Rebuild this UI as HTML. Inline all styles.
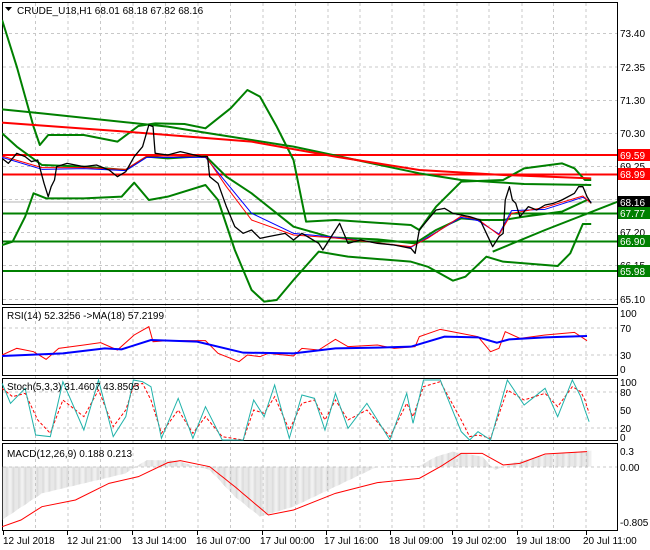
<!DOCTYPE html>
<html><head><meta charset="utf-8"><style>
html,body{margin:0;padding:0;background:#fff;width:650px;height:550px;overflow:hidden}
svg{display:block}
text{font-family:"Liberation Sans",sans-serif;font-size:10px;fill:#000}
</style></head><body>
<svg width="650" height="550" viewBox="0 0 650 550" xmlns="http://www.w3.org/2000/svg">
<defs>
<pattern id="hist" width="2.6" height="10" patternUnits="userSpaceOnUse"><rect x="0" y="0" width="0.9" height="10" fill="#b8b8b8"/></pattern>
<clipPath id="cMain"><rect x="2" y="2" width="615" height="303"/></clipPath>
</defs>
<rect width="650" height="550" fill="#fff"/>
<g stroke="#c8c8c8" stroke-dasharray="3,3" stroke-width="1">
<path d="M35.5 3V530M68 3V530M100.5 3V530M133 3V530M165.5 3V530M198 3V530M230.5 3V530M263 3V530M295.5 3V530M328 3V530M360 3V530M392 3V530M424 3V530M457 3V530M489 3V530M522 3V530M553.5 3V530M586 3V530"/>
<path d="M3 33.5H617M3 67H617M3 100.5H617M3 133.5H617M3 166.5H617M3 199.5H617M3 232.5H617M3 265.5H617M3 299.5H617"/>
<path d="M3 328H617M3 355H617M3 392H617M3 428H617M3 467H617"/>
</g>
<g fill="none" stroke="#000" stroke-width="1">
<rect x="2.5" y="2.5" width="615" height="302"/>
<rect x="2.5" y="307.5" width="615" height="68"/>
<rect x="2.5" y="378.5" width="615" height="62"/>
<rect x="2.5" y="443.5" width="615" height="87"/>
</g>
<g clip-path="url(#cMain)">
<path d="M3 155H617" stroke="#ff0000" stroke-width="2"/>
<path d="M3 174.5H617" stroke="#ff0000" stroke-width="2"/>
<path d="M3 202H617" stroke="#b4b4b4" stroke-width="1"/>
<path d="M3 213.5H617M3 241.5H617M3 271H617" stroke="#008000" stroke-width="2"/>
<g transform="scale(0.4193,0.33333)" fill="none" stroke-linejoin="round">
<polyline vector-effect="non-scaling-stroke" stroke="#008000" stroke-width="2" points="5,60 40,200 80,380 95,435 115,405 200,405 280,425 330,378 370,370 440,372 490,385 550,325 590,270 620,290 660,380 700,480 730,665 800,660 980,675 1000,690 1040,620 1100,545 1200,540 1250,505 1340,490 1370,505 1395,540 1410,540"/>
<polyline vector-effect="non-scaling-stroke" stroke="#008000" stroke-width="2" points="5,735 30,725 60,650 80,580 110,595 200,595 290,590 320,548 355,600 400,590 490,555 520,600 560,750 600,870 630,905 660,900 700,840 760,755 830,770 980,785 1020,800 1080,842 1110,830 1160,770 1200,785 1330,798 1360,760 1390,672 1410,672"/>
<polyline vector-effect="non-scaling-stroke" stroke="#008000" stroke-width="2" points="5,400 40,440 100,495 200,500 300,510 350,470 400,475 490,468 540,530 600,580 700,680 790,712 900,718 990,730 1040,690 1100,655 1150,660 1200,660 1250,650 1340,635 1400,600"/>
<polyline vector-effect="non-scaling-stroke" stroke="#008000" stroke-width="2" points="5,328 100,340 400,380 500,400 700,440 1000,520 1100,540 1250,552 1410,555"/>
<polyline vector-effect="non-scaling-stroke" stroke="#ff0000" stroke-width="2" points="5,368 300,395 600,425 800,470 1000,510 1200,525 1410,535"/>
<polyline vector-effect="non-scaling-stroke" stroke="#008000" stroke-width="2" points="1175,755 1300,690 1473,605"/>
<polyline vector-effect="non-scaling-stroke" stroke="#0000ff" stroke-width="1" points="5,472 100,508 200,506 300,512 350,472 490,472 540,548 600,640 700,700 800,712 980,742 1020,712 1100,652 1140,662 1190,702 1220,632 1300,628 1390,592 1410,606"/>
<polyline vector-effect="non-scaling-stroke" stroke="#ff0000" stroke-width="1" points="5,468 100,503 200,503 300,508 350,468 490,468 540,560 600,660 700,705 800,714 980,740 1020,715 1100,648 1140,658 1190,705 1220,640 1300,622 1390,588 1410,610"/>
<polyline vector-effect="non-scaling-stroke" stroke="#000" stroke-width="1.3" points="5,475 20,490 40,460 60,470 75,485 90,480 105,550 115,590 122,560 130,540 135,500 160,490 200,500 230,495 260,510 280,530 300,515 320,470 340,440 355,375 365,380 370,460 400,465 430,455 480,470 495,470 500,530 520,550 540,620 560,680 580,700 600,690 620,715 640,710 680,700 700,720 720,700 740,715 760,730 770,750 800,690 810,670 830,730 860,720 900,730 940,735 980,745 990,760 1000,690 1020,660 1040,630 1060,625 1080,640 1120,650 1145,660 1160,700 1175,740 1190,710 1200,700 1205,600 1215,560 1222,600 1230,610 1240,650 1260,620 1280,630 1300,615 1320,610 1340,600 1370,580 1380,560 1390,560 1400,590 1410,610"/>
</g>
</g>
<path d="M5 7h7l-3.5 4z" fill="#000"/>
<text x="17" y="14">CRUDE_U18,H1  68.01 68.18 67.82 68.16</text>
<g>
<text x="620" y="37">73.40</text><text x="620" y="71">72.35</text><text x="620" y="104">71.30</text><text x="620" y="137">70.30</text><text x="620" y="170">69.25</text><text x="620" y="236">67.20</text><text x="620" y="269">66.15</text><text x="620" y="303">65.10</text>
<rect x="618" y="149" width="32" height="12" fill="#ff0000"/><text x="620" y="159" style="fill:#fff">69.59</text>
<rect x="618" y="168" width="32" height="12" fill="#ff0000"/><text x="620" y="178" style="fill:#fff">68.99</text>
<rect x="618" y="196" width="32" height="12" fill="#000"/><text x="620" y="206" style="fill:#fff">68.16</text>
<rect x="618" y="207" width="32" height="12" fill="#008000"/><text x="620" y="217" style="fill:#fff">67.77</text>
<rect x="618" y="235" width="32" height="12" fill="#008000"/><text x="620" y="245" style="fill:#fff">66.90</text>
<rect x="618" y="265" width="32" height="12" fill="#008000"/><text x="620" y="275" style="fill:#fff">65.98</text>
</g>
<g transform="translate(0,300) scale(0.4193,0.33333)" fill="none">
<polyline vector-effect="non-scaling-stroke" stroke="#ff0000" stroke-width="1" points="5,165 40,145 80,155 110,178 140,145 200,135 240,128 280,150 320,105 355,80 365,125 400,122 490,122 520,160 570,185 590,165 620,170 640,160 700,168 720,145 760,150 800,118 830,140 900,135 940,145 990,140 1000,110 1050,88 1090,98 1140,110 1170,155 1190,145 1205,95 1240,115 1300,105 1370,97 1400,122"/>
<polyline vector-effect="non-scaling-stroke" stroke="#0000ff" stroke-width="2" points="5,168 150,160 250,145 290,148 360,120 470,125 580,158 700,160 800,145 900,143 980,140 1060,110 1140,112 1185,128 1215,118 1300,112 1400,108"/>
<polyline vector-effect="non-scaling-stroke" stroke="#ff0000" stroke-width="1" stroke-dasharray="3,2" points="5,265 30,290 60,280 90,360 120,400 150,300 200,350 235,270 270,380 300,330 318,260 340,250 360,300 385,400 425,330 460,400 490,350 530,410 580,420 605,330 630,340 655,290 690,390 720,310 750,300 775,360 800,300 830,360 875,330 930,410 970,310 985,350 1010,260 1050,245 1100,360 1120,410 1140,405 1170,415 1210,270 1250,300 1300,280 1330,320 1365,260 1385,275 1395,300 1405,340"/>
<polyline vector-effect="non-scaling-stroke" stroke="#20b2aa" stroke-width="1" points="5,250 25,310 60,265 85,405 120,410 150,245 200,390 235,240 270,410 300,350 318,240 340,245 360,260 385,415 425,295 460,415 490,320 530,420 580,420 605,300 630,350 655,255 690,415 720,285 750,295 775,390 800,280 830,385 875,310 930,420 970,280 985,370 1010,240 1050,240 1100,395 1120,420 1140,395 1170,420 1210,240 1250,315 1300,265 1330,350 1365,240 1385,290 1395,330 1405,365"/>
</g>
<g transform="translate(0,300) scale(0.4193,0.33333)">
<polygon fill="url(#hist)" points="5,500 5,660 100,580 300,520 350,480 420,482 500,510 560,590 620,650 700,620 900,500 1000,498 1040,470 1080,455 1150,470 1180,510 1220,490 1300,465 1400,452 1410,452 1410,500"/>
<polyline vector-effect="non-scaling-stroke" fill="none" stroke="#ff0000" stroke-width="1" points="5,680 50,660 100,620 180,600 260,550 330,530 400,488 430,482 500,500 560,560 640,645 700,630 800,580 900,548 1000,535 1050,500 1100,460 1150,460 1200,495 1240,490 1300,462 1400,455"/>
</g>
<text x="7" y="319">RSI(14) 52.3256  -&gt;MA(18) 57.2199</text>
<text x="7" y="390">Stoch(5,3,3) 31.4607 43.8505</text>
<text x="7" y="457">MACD(12,26,9) 0.188 0.213</text>
<g>
<text x="620" y="317">100</text><text x="620" y="332">70</text><text x="620" y="359">30</text><text x="620" y="373">0</text>
<text x="620" y="386">100</text><text x="620" y="396">80</text><text x="620" y="414">50</text><text x="620" y="432">20</text><text x="620" y="441">0</text>
<text x="620" y="455">0.3</text><text x="620" y="471">0.00</text><text x="620" y="526">-0.805</text>
</g>
<g stroke="#000" stroke-width="1"><path d="M3.5 531v4M67.5 531v4M132.5 531v4M197.5 531v4M262.5 531v4M326.5 531v4M390.5 531v4M452.5 531v4M517.5 531v4M586.5 531v4"/></g>
<g>
<text x="3" y="544">12 Jul 2018</text><text x="67" y="544">12 Jul 21:00</text><text x="132" y="544">13 Jul 14:00</text><text x="196" y="544">16 Jul 07:00</text><text x="260" y="544">17 Jul 00:00</text><text x="324" y="544">17 Jul 16:00</text><text x="389" y="544">18 Jul 09:00</text><text x="452" y="544">19 Jul 02:00</text><text x="516" y="544">19 Jul 18:00</text><text x="583" y="544">20 Jul 11:00</text>
</g>
</svg>
</body></html>
